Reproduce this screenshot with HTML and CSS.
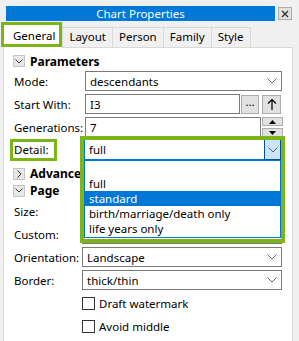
FILE: index.html
```html
<!DOCTYPE html>
<html>
<head>
<meta charset="utf-8">
<link rel="stylesheet" href="styles.css">
</head>
<body>
<div class="titlebar">
  <div class="title">Chart Properties</div>
  <div class="close"><svg width="8" height="8" viewBox="0 0 8 8"><path d="M1 1L7 7M7 1L1 7" stroke="#333" stroke-width="1.4"/></svg></div>
</div>
<div class="tabs">
  <div class="tab active">General<span class="hl hl-tab"></span></div>
  <div class="tab">Layout</div>
  <div class="tab">Person</div>
  <div class="tab">Family</div>
  <div class="tab">Style</div>
</div>
<div class="panel">
  <div class="section first"><span class="exp"><svg width="8" height="5" viewBox="0 0 8 5"><path d="M0.5 0.5L4 4L7.5 0.5" fill="none" stroke="#333" stroke-width="1"/></svg></span><span class="sec-title">Parameters</span></div>
  <div class="row r-mode"><span class="lbl">Mode:</span><div class="combo"><span class="val">descendants</span><svg class="chev" width="10" height="6" viewBox="0 0 10 6"><path d="M0.5 0.5L5 5L9.5 0.5" fill="none" stroke="#606060" stroke-width="1"/></svg></div></div>
  <div class="row"><span class="lbl">Start With:</span><div class="input"><span class="val">I3</span></div><div class="btn dots">...</div><div class="btn up"><svg width="10" height="13" viewBox="0 0 10 13"><path d="M5 12V1.5M1 5.5L5 1.5L9 5.5" fill="none" stroke="#000" stroke-width="1.2"/></svg></div></div>
  <div class="row"><span class="lbl">Generations:</span><div class="input gen"><span class="val">7</span></div><div class="spin"><div class="sb"><svg width="7" height="4" viewBox="0 0 7 4"><path d="M0 4L3.5 0L7 4Z" fill="#000"/></svg></div><div class="sb"><svg width="7" height="4" viewBox="0 0 7 4"><path d="M0 0L3.5 4L7 0Z" fill="#000"/></svg></div></div></div>
  <div class="row detail"><span class="lbl">Detail:<span class="hl hl-lbl"></span></span>
    <div class="combo focused"><span class="val">full</span><span class="ddb"><svg width="10" height="6" viewBox="0 0 10 6"><path d="M0.5 0.5L5 5L9.5 0.5" fill="none" stroke="#606060" stroke-width="1"/></svg></span>
      <div class="list">
        <div class="item"></div>
        <div class="item">full</div>
        <div class="item sel">standard</div>
        <div class="item">birth/marriage/death only</div>
        <div class="item">life years only</div>
      </div>
      <span class="hl hl-combo"></span>
    </div>
  </div>
  <div class="section adv"><span class="exp"><svg width="5" height="8" viewBox="0 0 5 8"><path d="M0.5 0.5L4 4L0.5 7.5" fill="none" stroke="#333" stroke-width="1"/></svg></span><span class="sec-title">Advanced</span></div>
  <div class="section"><span class="exp"><svg width="8" height="5" viewBox="0 0 8 5"><path d="M0.5 0.5L4 4L7.5 0.5" fill="none" stroke="#333" stroke-width="1"/></svg></span><span class="sec-title">Page</span></div>
  <div class="row page first-page"><span class="lbl">Size:</span><div class="combo"></div></div>
  <div class="row page"><span class="lbl">Custom:</span><div class="input"></div></div>
  <div class="row page"><span class="lbl">Orientation:</span><div class="combo"><span class="val">Landscape</span><svg class="chev" width="10" height="6" viewBox="0 0 10 6"><path d="M0.5 0.5L5 5L9.5 0.5" fill="none" stroke="#606060" stroke-width="1"/></svg></div></div>
  <div class="row page"><span class="lbl">Border:</span><div class="combo"><span class="val">thick/thin</span><svg class="chev" width="10" height="6" viewBox="0 0 10 6"><path d="M0.5 0.5L5 5L9.5 0.5" fill="none" stroke="#606060" stroke-width="1"/></svg></div></div>
  <div class="check"><span class="box"></span><span>Draft watermark</span></div>
  <div class="check"><span class="box"></span><span>Avoid middle</span></div>
</div>
</body>
</html>
```
FILE: styles.css
```css
* { box-sizing: border-box; }
html, body { margin: 0; padding: 0; }
body {
  background: #f0f0f0;
  font-family: "Noto Sans", "Open Sans", sans-serif;
  font-size: 11.5px;
  color: #000;
  width: 299px;
  height: 341px;
  overflow: hidden;
}
.titlebar {
  display: flex;
  align-items: flex-start;
  padding: 6px 0 0 6px;
}
.title {
  width: 269px;
  height: 15px;
  background: #0078d7;
  color: #fff;
  text-align: center;
  line-height: 15px;
  font-size: 11.5px;
}
.close {
  margin: 1px 0 0 3px;
  width: 14px;
  height: 13px;
  background: #e1e1e1;
  border: 1px solid #adadad;
  display: flex;
  align-items: center;
  justify-content: center;
}
.tabs {
  display: flex;
  align-items: flex-end;
  height: 23px;
  margin-top: 3px;
  padding-left: 3px;
}
.tab {
  height: 20px;
  line-height: 18px;
  padding: 0 6px;
  border: 1px solid #d9d9d9;
  border-bottom: none;
  border-left: none;
  background: #f0f0f0;
}
.tab.active {
  position: relative;
  z-index: 2;
  height: 24px;
  line-height: 22px;
  margin-bottom: -1px;
  background: #fff;
  border-left: 1px solid #d9d9d9;
  padding: 0 7px 0 9px;
}
.panel {
  margin-left: 3px;
  width: 290px;
  height: 320px;
  background: #fff;
  border: 1px solid #d9d9d9;
}
.hl {
  position: absolute;
  border: 4px solid #7cb518;
  pointer-events: none;
}
.hl-tab { left: -3px; top: -3px; width: 61px; height: 25px; border-width: 3.5px; }
.section {
  display: flex;
  align-items: center;
  height: 17px;
  padding-left: 9px;
  font-weight: bold;
}
.section.first { margin-top: 5px; height: 16px; }
.section.adv { margin-top: 4px; }
.exp {
  width: 12px;
  height: 12px;
  border: 1px solid #c4c4c4;
  background: #e8e8e8;
  display: flex;
  align-items: center;
  justify-content: center;
  margin-right: 5px;
}
.sec-title { font-size: 12px; }
.row {
  display: flex;
  align-items: center;
  height: 20px;
  margin-top: 3px;
  padding-left: 10px;
}
.row.r-mode { margin-top: 2px; }
.lbl {
  width: 71px;
  flex: none;
  position: relative;
}
.row.page .lbl { width: 68px; }
.row.page.first-page { margin-top: 2px; }
.combo, .input {
  position: relative;
  height: 20px;
  border: 1px solid #7a7a7a;
  background: #fff;
  display: flex;
  align-items: center;
  padding-left: 4px;
  width: 197px;
}
.row.page .combo, .row.page .input { width: 200px; }
.val { flex: 1; white-space: nowrap; }
.chev { margin-right: 4px; }
.input { width: 155px; }
.input.gen { width: 176px; }
.btn {
  height: 19px;
  background: #e1e1e1;
  border: 1px solid #adadad;
  display: flex;
  align-items: center;
  justify-content: center;
}
.btn.dots { width: 18px; margin-left: 1px; line-height: 1; padding-bottom: 4px; }
.btn.up { width: 19px; margin-left: 3px; }
.spin {
  width: 21px;
  height: 20px;
  display: flex;
  flex-direction: column;
  justify-content: space-between;
  margin-left: 1px;
}
.sb {
  height: 9px;
  background: #e1e1e1;
  border: 1px solid #adadad;
  display: flex;
  align-items: center;
  justify-content: center;
}
.row.detail {
  position: relative;
  z-index: 5;
  height: 21px;
  margin-top: 2px;
}
.combo.focused {
  border-color: #0078d7;
  height: 21px;
  width: 197px;
  margin-left: -1px;
}
.ddb {
  align-self: stretch;
  width: 17px;
  margin: -1px -1px -1px 0;
  background: #cce4f7;
  border: 1px solid #005499;
  display: flex;
  align-items: center;
  justify-content: center;
}
.list {
  position: absolute;
  left: -1px;
  right: -1px;
  top: 20px;
  height: 78px;
  background: #fff;
  border: 1px solid #0078d7;
  padding-top: 0;
}
.item {
  height: 15px;
  line-height: 15px;
  padding-left: 4px;
  white-space: nowrap;
}
.item.sel { background: #0078d7; color: #fff; }
.hl-combo { left: -5px; top: -4px; right: -5px; height: 107px; }
.hl-lbl { left: -4px; top: -3px; width: 47px; height: 22px; border-width: 3.5px; }
.section.adv { margin-top: 5px; }
.check {
  display: flex;
  align-items: center;
  height: 18px;
  margin-top: 4px;
  padding-left: 78px;
}
.check + .check { margin-top: 5px; }
.box {
  width: 13px;
  height: 13px;
  border: 1px solid #333;
  background: #fff;
  margin-right: 4px;
}
```
